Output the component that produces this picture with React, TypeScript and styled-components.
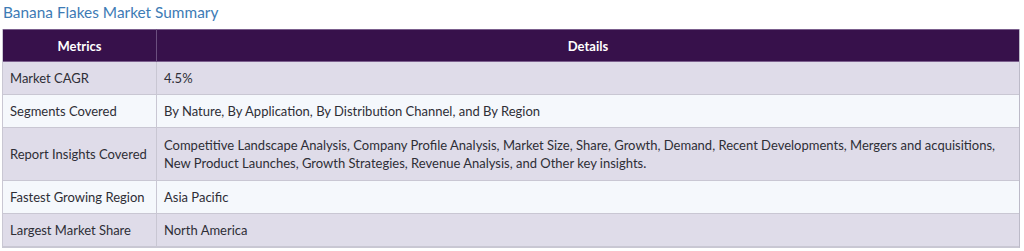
import styled, { createGlobalStyle } from 'styled-components';

type Row = {
  metric: string;
  details: string[];
};

const rows: Row[] = [
  { metric: 'Market CAGR', details: ['4.5%'] },
  {
    metric: 'Segments Covered',
    details: ['By Nature, By Application, By Distribution Channel, and By Region'],
  },
  {
    metric: 'Report Insights Covered',
    details: [
      'Competitive Landscape Analysis, Company Profile Analysis, Market Size, Share, Growth, Demand, Recent Developments, Mergers and acquisitions,',
      'New Product Launches, Growth Strategies, Revenue Analysis, and Other key insights.',
    ],
  },
  { metric: 'Fastest Growing Region', details: ['Asia Pacific'] },
  { metric: 'Largest Market Share', details: ['North America'] },
];

const GlobalStyle = createGlobalStyle`
  html, body {
    margin: 0;
    padding: 0;
    background: #ffffff;
  }
  body {
    font-family: Lato, 'Open Sans', sans-serif;
  }
`;

const Page = styled.div`
  width: 1024px;
  height: 251px;
  padding: 2px 4px 0 2px;
  box-sizing: border-box;
`;

const Title = styled.h2`
  margin: 0 0 7px 1px;
  height: 20px;
  font-size: 15.4px;
  font-weight: 400;
  line-height: 20px;
  color: #3d7bb5;
`;

const Table = styled.div`
  display: grid;
  grid-template-columns: 153px 1fr;
  border: 1px solid #c9c7d3;
  border-top: none;
  border-right-color: #bcbac8;
`;

const HeadCell = styled.div`
  height: 33px;
  display: flex;
  align-items: center;
  justify-content: center;
  background: #37114b;
  color: #ffffff;
  font-size: 13px;
  font-weight: 700;
  border-top: 1px solid #7b5f8d;
  border-bottom: 1px solid #7b5f8d;
  box-sizing: border-box;

  & + & {
    border-left: 1px solid #6b4f7f;
  }
`;

const Cell = styled.div<{ $alt: boolean; $tall: boolean; $first: boolean }>`
  min-height: ${(p) => (p.$tall ? '53px' : '33px')};
  box-sizing: border-box;
  display: flex;
  flex-direction: column;
  justify-content: center;
  padding: 0 7px;
  background: ${(p) => (p.$alt ? '#dfdce9' : '#f5f8fc')};
  border-bottom: 1px solid #c9c7d3;
  border-left: ${(p) => (p.$first ? 'none' : '1px solid #c9c7d3')};
  color: #2e2e36;
  font-size: 13px;
  line-height: 18px;
  white-space: nowrap;
`;

export default function App() {
  return (
    <Page>
      <GlobalStyle />
      <Title>Banana Flakes Market Summary</Title>
      <Table>
        <HeadCell>Metrics</HeadCell>
        <HeadCell>Details</HeadCell>
        {rows.map((row, i) => {
          const alt = i % 2 === 0;
          const tall = row.details.length > 1;
          return [
            <Cell key={`m-${i}`} $alt={alt} $tall={tall} $first>
              {row.metric}
            </Cell>,
            <Cell key={`d-${i}`} $alt={alt} $tall={tall} $first={false}>
              {row.details.map((line) => (
                <span key={line}>{line}</span>
              ))}
            </Cell>,
          ];
        })}
      </Table>
    </Page>
  );
}
